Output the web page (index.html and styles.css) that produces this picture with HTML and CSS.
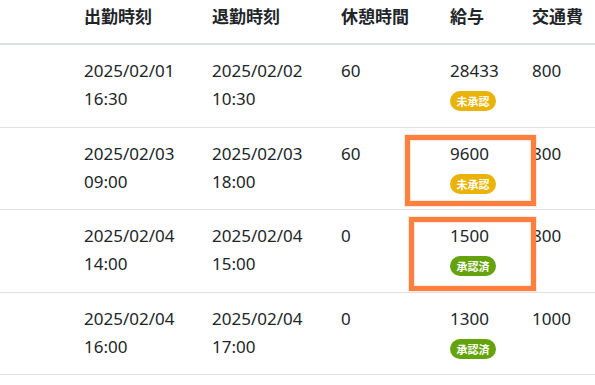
FILE: index.html
```html
<!DOCTYPE html>
<html lang="ja">
<head>
<meta charset="utf-8">
<link rel="stylesheet" href="styles.css">
</head>
<body>
<div class="wrap">
  <table class="tbl">
    <colgroup>
      <col class="c0"><col class="c1"><col class="c2"><col class="c3"><col class="c4"><col class="c5">
    </colgroup>
    <thead>
      <tr><th></th><th>出勤時刻</th><th>退勤時刻</th><th>休憩時間</th><th>給与</th><th>交通費</th></tr>
    </thead>
    <tbody>
      <tr>
        <td></td>
        <td>2025/02/01<br>16:30</td>
        <td>2025/02/02<br>10:30</td>
        <td>60</td>
        <td><div>28433</div><span class="badge pending">未承認</span></td>
        <td>800</td>
      </tr>
      <tr>
        <td></td>
        <td>2025/02/03<br>09:00</td>
        <td>2025/02/03<br>18:00</td>
        <td>60</td>
        <td><div>9600</div><span class="badge pending">未承認</span></td>
        <td>800</td>
      </tr>
      <tr>
        <td></td>
        <td>2025/02/04<br>14:00</td>
        <td>2025/02/04<br>15:00</td>
        <td>0</td>
        <td><div>1500</div><span class="badge approved">承認済</span></td>
        <td>800</td>
      </tr>
      <tr>
        <td></td>
        <td>2025/02/04<br>16:00</td>
        <td>2025/02/04<br>17:00</td>
        <td>0</td>
        <td><div>1300</div><span class="badge approved">承認済</span></td>
        <td>1000</td>
      </tr>
    </tbody>
  </table>
  <div class="mark mark-a"></div>
  <div class="mark mark-b"></div>
</div>
</body>
</html>
```

FILE: styles.css
```css
html, body {
  margin: 0;
  padding: 0;
  background: #fff;
  overflow: hidden;
}
body {
  font-family: "Noto Sans", "Noto Sans CJK JP", sans-serif;
  color: #212529;
  font-size: 17px;
}
.wrap {
  position: relative;
  width: 595px;
}
.tbl {
  width: 595px;
  table-layout: fixed;
  border-collapse: collapse;
}
.c0 { width: 72px; }
.c1 { width: 128px; }
.c2 { width: 129px; }
.c3 { width: 109px; }
.c4 { width: 82px; }
.c5 { width: 75px; }
.tbl th {
  text-align: left;
  font-family: "Noto Sans CJK JP", sans-serif;
  font-weight: 700;
  line-height: 28px;
  padding: 2px 12px 13px;
  border-bottom: 2px solid #dee2e6;
  white-space: nowrap;
}
.tbl td {
  vertical-align: top;
  line-height: 28px;
  padding: 12px 12px 13.5px;
  border-bottom: 1px solid #dee2e6;
  white-space: nowrap;
}
.badge {
  display: inline-block;
  margin-top: 6px;
  height: 20px;
  line-height: 20px;
  padding: 0 6.5px;
  border-radius: 10px;
  color: #fff;
  font-family: "Noto Sans CJK JP", sans-serif;
  font-size: 11px;
  font-weight: 700;
  vertical-align: top;
}
.pending { background: #eab308; }
.approved { background: #65a30d; }
.mark {
  position: absolute;
  border: 5px solid #ff7f3f;
  box-sizing: border-box;
  box-shadow: 0 0 0 1px rgba(255, 127, 63, 0.18), inset 0 0 0 1px rgba(255, 127, 63, 0.18);
}
.mark-a { left: 405px; top: 135px; width: 131px; height: 71px; }
.mark-b { left: 409px; top: 217px; width: 127px; height: 74px; }
```
